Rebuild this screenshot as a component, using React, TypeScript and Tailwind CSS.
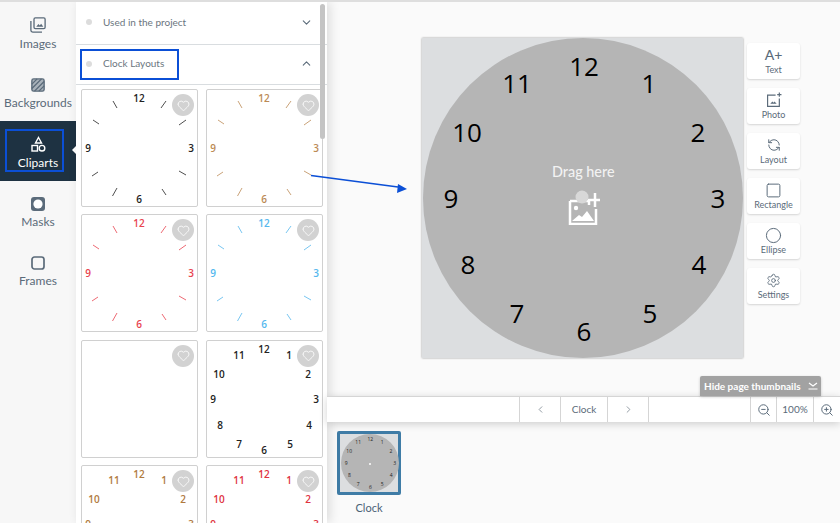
import { ChevronDown, ChevronLeft, ChevronRight, ChevronUp, Circle, Heart, RefreshCcw, Settings, Square, ZoomIn, ZoomOut } from 'lucide-react'
import type { ReactNode } from 'react'

// number positions inside a 117px card
const cardNumbers: [string, number, number][] = [
  ['12', 58, 8], ['1', 83, 14], ['2', 102, 33], ['3', 110, 58], ['4', 103, 84], ['5', 84, 103],
  ['6', 58, 109], ['7', 33, 103], ['8', 14, 84], ['9', 7, 58], ['10', 13, 33], ['11', 33, 14],
]

// number positions on the big clock, relative to the canvas corner
const bigNumbers: [string, number, number][] = [
  ['12', 162, 28], ['1', 227, 45], ['2', 276, 94], ['3', 296, 160], ['4', 277, 226], ['5', 228, 275],
  ['6', 162, 293], ['7', 95, 275], ['8', 46, 226], ['9', 29, 160], ['10', 45, 94], ['11', 95, 45],
]

const ticks = [
  [84, 11, 79, 18], [104, 30, 97, 35], [104, 85, 97, 81], [84, 105, 80, 99],
  [30.5, 106, 35, 98], [10, 86, 16, 82], [11, 30, 17, 34], [31, 11, 35, 18],
]

function SideItem({ icon, label, active }: { icon: ReactNode; label: string; active?: boolean }) {
  return (
    <div className={`relative h-[59.5px] pt-[6px] flex flex-col items-center justify-center gap-[3px] ${active ? 'bg-[#1e3242] text-white' : 'text-[#5b6b7a]'}`}>
      {icon}
      <span className="text-[12px] leading-[16px]">{label}</span>
      {active && <span className="absolute right-0 top-[25px] w-0 h-0 border-y-[4px] border-y-transparent border-r-[4px] border-r-white" />}
    </div>
  )
}

function AccordionRow({ label, open, className }: { label: string; open?: boolean; className: string }) {
  return (
    <div className={`flex items-center pl-[10px] pr-[14px] pb-[2px] border-b border-[#d9dde0] ${className}`}>
      <span className="w-[6px] h-[6px] rounded-full bg-[#dcdcdc]" />
      <span className="ml-[11px] flex-1 text-[10px] text-[#6b7680]">{label}</span>
      {open ? <ChevronUp size={13} className="text-[#5b6b7a]" /> : <ChevronDown size={13} className="text-[#5b6b7a]" />}
    </div>
  )
}

function ClockCard({ color, hasTicks, all, empty }: { color: string; hasTicks?: boolean; all?: boolean; empty?: boolean }) {
  const nums = empty ? [] : all ? cardNumbers : cardNumbers.filter((n) => ['12', '3', '6', '9'].includes(n[0]))
  return (
    <div className="relative h-[118px] bg-white border border-[#d0d0d0] rounded-[2px]">
      {hasTicks && (
        <svg className="absolute inset-0" width="115" height="116" viewBox="0 0 115 116">
          {ticks.map((t, i) => (
            <line key={i} x1={t[0]} y1={t[1]} x2={t[2]} y2={t[3]} stroke={color} strokeWidth="0.8" />
          ))}
        </svg>
      )}
      {nums.map(([n, x, y]) => (
        <span
          key={n}
          className="absolute -translate-x-1/2 -translate-y-1/2 font-['Open_Sans',sans-serif] text-[10px] leading-none font-semibold"
          style={{ left: x - 1, top: y, color }}
        >
          {n}
        </span>
      ))}
      <span className="absolute left-[90px] top-[4px] w-[22px] h-[22px] rounded-full bg-[#d2d2d2] flex items-center justify-center">
        <Heart size={13} className="text-white" strokeWidth={1.5} />
      </span>
    </div>
  )
}

function ToolCard({ icon, label }: { icon: ReactNode; label: string }) {
  return (
    <div className="w-[53px] h-[36px] bg-white rounded-[3px] shadow-[0_1px_2px_rgba(0,0,0,0.15)] flex flex-col items-center justify-center text-[#5b6b7a]">
      <span className="h-[18px] flex items-center">{icon}</span>
      <span className="text-[9px] leading-[12px]">{label}</span>
    </div>
  )
}

function BarCell({ children, className }: { children?: ReactNode; className: string }) {
  return <div className={`h-full border-l border-[#d5d5d5] flex items-center justify-center ${className}`}>{children}</div>
}

export default function App() {
  return (
    <div className="relative w-[840px] h-[523px] overflow-hidden flex border-t-2 border-[#dedede] bg-[#fafafa] font-['Lato',sans-serif]">
      {/* Left rail */}
      <aside className="w-[76px] h-[521px] shrink-0 bg-[#f7f7f7]">
        <SideItem
          label="Images"
          icon={
            <svg width="16" height="16" viewBox="0 0 18 18" fill="none" stroke="#5b6b7a" strokeWidth="1.5">
              <rect x="4.5" y="1" width="12.5" height="12" rx="1.5" />
              <path d="M1 4.5V15a2 2 0 0 0 2 2h10.5" />
              <path d="M7 11l2.5-3 1.5 1.5 1.5-2L15 11z" fill="#5b6b7a" stroke="none" />
            </svg>
          }
        />
        <SideItem
          label="Backgrounds"
          icon={
            <svg width="14" height="14" viewBox="0 0 16 16">
              <rect width="14" height="14" x="1" y="1" rx="2" fill="#a9b2ba" stroke="#5b6b7a" strokeWidth="1.6" />
              <path d="M1 7L7 1M1 12L12 1M4 15L15 4M9 15l6-6" stroke="#5b6b7a" strokeWidth="1.6" />
            </svg>
          }
        />
        <SideItem
          active
          label="Cliparts"
          icon={
            <svg width="15" height="16" viewBox="0 0 15 16" fill="none" stroke="white" strokeWidth="1.4">
              <path d="M7.5 1.5L10.5 7h-6z" />
              <rect x="1" y="9.5" width="5.5" height="5.5" />
              <circle cx="11" cy="12.2" r="2.8" />
            </svg>
          }
        />
        <SideItem
          label="Masks"
          icon={
            <svg width="14" height="14" viewBox="0 0 14 14">
              <rect width="14" height="14" rx="3" fill="#5b6b7a" />
              <circle cx="7" cy="7" r="4.6" fill="white" />
            </svg>
          }
        />
        <SideItem
          label="Frames"
          icon={
            <svg width="14" height="14" viewBox="0 0 14 14" fill="none">
              <rect x="1" y="1" width="12" height="12" rx="2.5" stroke="#5b6b7a" strokeWidth="1.7" />
            </svg>
          }
        />
      </aside>

      {/* Clipart panel */}
      <section className="relative z-10 w-[251px] h-[521px] shrink-0 bg-white overflow-hidden shadow-[3px_0_10px_rgba(0,0,0,0.12)]">
        <AccordionRow label="Used in the project" className="h-[43px]" />
        <AccordionRow label="Clock Layouts" open className="h-[40px]" />
        <div className="grid grid-cols-[117px_117px] gap-x-[8px] gap-y-[7.4px] pl-[5px] pt-[4px]">
          <ClockCard color="#222222" hasTicks />
          <ClockCard color="#bb8a55" hasTicks />
          <ClockCard color="#e8434f" hasTicks />
          <ClockCard color="#55b8ee" hasTicks />
          <ClockCard color="#222222" empty />
          <ClockCard color="#222222" all />
          <ClockCard color="#b07a3e" all />
          <ClockCard color="#e0333f" all />
        </div>
        <span className="absolute left-[244px] top-[2px] w-[5px] h-[135px] rounded-full bg-[#c4c4c4]" />
      </section>

      {/* Workspace */}
      <main className="relative flex-1 h-[521px] flex flex-col">
        <div className="h-[394px] flex pl-[95px] pt-[36px]">
          <div className="relative w-[321px] h-[320px] bg-[#dcdee0] shadow-[0_0_2px_rgba(0,0,0,0.4)]">
            <div className="absolute left-[1px] top-0 w-[320px] h-[320px] rounded-full bg-[#b5b5b5]" />
            {bigNumbers.map(([n, x, y]) => (
              <span
                key={n}
                className="absolute -translate-x-1/2 -translate-y-1/2 font-['Open_Sans',sans-serif] text-[26px] leading-none text-black"
                style={{ left: x, top: y }}
              >
                {n}
              </span>
            ))}
            <span className="absolute left-[130px] top-[126px] whitespace-nowrap text-[14.4px] leading-[16px] font-medium text-[#f2f2f2]">Drag here</span>
            <svg className="absolute left-[146px] top-[152px]" width="32" height="35" viewBox="0 0 32 35">
              <path d="M2 11h19v4M28 19v15H2V11" fill="none" stroke="white" strokeWidth="2.5" />
              <circle cx="8" cy="18" r="2.2" fill="white" />
              <path d="M4 31l7-6 3 2 5-6 7 10z" fill="white" />
              <path d="M27 3v14M20 10h12" stroke="white" strokeWidth="2.5" />
              <circle cx="14" cy="7" r="6.5" fill="#d8d8d8" />
            </svg>
          </div>
          <div className="ml-[4px] mt-[5px] flex flex-col gap-[9px]">
            <ToolCard icon={<span className="text-[14px] font-medium leading-none">A+</span>} label="Text" />
            <ToolCard
              icon={
                <svg width="16" height="16" viewBox="0 0 15 15" fill="none" stroke="#5b6b7a" strokeWidth="1.1">
                  <path d="M9 3H1.5v10.5h11V6" />
                  <path d="M4 11l2-2 1 1 1-1 2 2z" fill="#5b6b7a" stroke="none" />
                  <path d="M12.5 0.5v4M10.5 2.5h4" />
                </svg>
              }
              label="Photo"
            />
            <ToolCard icon={<RefreshCcw size={14} strokeWidth={1.7} />} label="Layout" />
            <ToolCard icon={<Square size={17} strokeWidth={1.4} />} label="Rectangle" />
            <ToolCard icon={<Circle size={17} strokeWidth={1.4} />} label="Ellipse" />
            <ToolCard icon={<Settings size={15} strokeWidth={1.4} />} label="Settings" />
          </div>
        </div>

        {/* Page bar */}
        <div className="relative z-10 h-[26px] shrink-0 bg-white border-t border-[#d5d5d5] flex shadow-[0_2px_8px_rgba(0,0,0,0.18)] text-[#5b6b7a]">
          <div className="w-[192px]" />
          <BarCell className="w-[41px]"><ChevronLeft size={11} className="text-[#8a949c]" /></BarCell>
          <BarCell className="w-[47px] text-[10px]">Clock</BarCell>
          <BarCell className="w-[41px]"><ChevronRight size={11} className="text-[#8a949c]" /></BarCell>
          <BarCell className="w-[102px]" />
          <BarCell className="w-[26px]"><ZoomOut size={14} strokeWidth={1.7} /></BarCell>
          <BarCell className="w-[37px] text-[10px]">100%</BarCell>
          <BarCell className="w-[27px]"><ZoomIn size={14} strokeWidth={1.7} /></BarCell>
          <div className="absolute left-[373px] top-[-21px] w-[121px] h-[20px] rounded-t-[2px] bg-[#a2a2a2] flex items-center pl-[4px] justify-between pr-[3px] whitespace-nowrap text-[10px] font-bold text-white shadow-[0_1px_3px_rgba(0,0,0,0.2)]">
            Hide page thumbnails
            <svg width="10" height="8" viewBox="0 0 10 8" fill="none" stroke="white" strokeWidth="1.2">
              <path d="M1 1l4 3 4-3M0.5 7h9" />
            </svg>
          </div>
        </div>

        {/* Thumbnails */}
        <div className="flex-1 pl-[10px] pt-[9px]">
          <div className="w-[64px] flex flex-col items-center">
            <div className="relative w-[64px] h-[64px] bg-[#dcdee0] border-[3px] border-[#3f7ca6] rounded-[2px]">
              <div className="absolute left-[1px] top-0 w-[58px] h-[58px] rounded-full bg-[#b5b5b5]" />
              {bigNumbers.map(([n, x, y]) => (
                <span
                  key={n}
                  className="absolute -translate-x-1/2 -translate-y-1/2 font-['Open_Sans',sans-serif] text-[5px] leading-none text-[#222222]"
                  style={{ left: x * 0.181 + 1, top: y * 0.181 }}
                >
                  {n}
                </span>
              ))}
              <span className="absolute left-[29px] top-[29px] w-[2px] h-[2px] rounded-full bg-white" />
            </div>
            <span className="mt-[5px] text-[11px] text-[#4a6176]">Clock</span>
          </div>
        </div>
      </main>

      {/* Annotations drawn over the shot */}
      <div className="absolute z-20 left-[80px] top-[47px] w-[99px] h-[31px] border-2 border-[#0b4fd6]" />
      <div className="absolute z-20 left-[5px] top-[127px] w-[59px] h-[43px] border-2 border-[#0b4fd6]" />
      <svg className="absolute left-0 top-0 z-20" width="840" height="521" viewBox="0 0 840 521" fill="none">
        <path d="M311 173.5L398 185" stroke="#0b4fd6" strokeWidth="1.6" />
        <path d="M407 187l-10 4 1-9z" fill="#0b4fd6" />
      </svg>
    </div>
  )
}
